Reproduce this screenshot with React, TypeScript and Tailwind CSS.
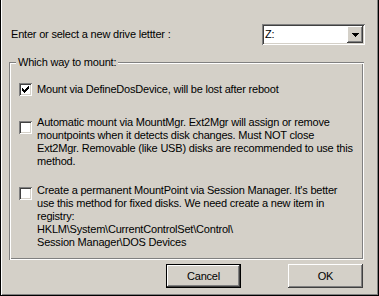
import type { ReactNode } from 'react';

const raised =
  'shadow-[inset_-1px_-1px_#404040,inset_1px_1px_#ffffff,inset_-2px_-2px_#808080,inset_2px_2px_#d4d0c8]';
const sunken =
  'shadow-[inset_1px_1px_#808080,inset_-1px_-1px_#ffffff,inset_2px_2px_#404040,inset_-2px_-2px_#d4d0c8]';

function CheckBox({ checked }: { checked?: boolean }) {
  return (
    <span className={`relative block h-[13px] w-[13px] shrink-0 bg-white ${sunken}`}>
      {checked && (
        <svg className="absolute left-[3px] top-[3px]" width="7" height="7" viewBox="0 0 7 7" shapeRendering="crispEdges">
          <path
            fill="#000"
            d="M6 0h1v1h-1z M5 1h2v1h-2z M0 2h1v1h-1z M4 2h3v1h-3z M0 3h2v1h-2z M3 3h3v1h-3z M0 4h5v1h-5z M1 5h3v1h-3z M2 6h1v1h-1z"
          />
        </svg>
      )}
    </span>
  );
}

function Option({
  checked,
  boxOffset,
  className,
  lines,
}: {
  checked?: boolean;
  boxOffset: string;
  className: string;
  lines: ReactNode[];
}) {
  return (
    <div className={`flex items-start pl-[10px] ${className}`}>
      <div className={boxOffset}>
        <CheckBox checked={checked} />
      </div>
      <div className="ml-[5px] leading-[13px]">
        {lines.map((line, i) => (
          <div key={i} className="whitespace-pre">
            {line}
          </div>
        ))}
      </div>
    </div>
  );
}

function Button({ children, isDefault }: { children: ReactNode; isDefault?: boolean }) {
  if (isDefault) {
    return (
      <div className="h-[24px] w-[75px] bg-black p-px">
        <div className={`flex h-full w-full items-center justify-center bg-[#d4d0c8] ${raised}`}>{children}</div>
      </div>
    );
  }
  return (
    <div className={`flex h-[24px] w-[75px] items-center justify-center bg-[#d4d0c8] ${raised}`}>{children}</div>
  );
}

export default function App() {
  return (
    <div
      className="h-[296px] w-[379px] overflow-hidden bg-[#d4d0c8] pt-[24px] text-[11px] tracking-[-0.2px] text-black shadow-[inset_1px_0_#000000,inset_-1px_0_#000000,inset_0_-1px_#000000,inset_2px_0_#ffffff,inset_-2px_0_#808080,inset_0_-2px_#808080]"
      style={{ fontFamily: '"Liberation Sans", Arial, sans-serif' }}
    >
      {/* drive letter row */}
      <div className="flex items-center justify-between pl-[11px] pr-[14px]">
        <span>Enter or select a new drive lettter :</span>
        <div className={`flex h-[21px] w-[103px] items-center bg-white p-[2px] ${sunken}`}>
          <span className="flex-1 pl-[1px] leading-[17px]">Z:</span>
          <span className={`flex h-[17px] w-[16px] items-center justify-center bg-[#d4d0c8] ${raised}`}>
            <svg width="7" height="4" viewBox="0 0 7 4" shapeRendering="crispEdges">
              <path fill="#000" d="M0 0h7v1h-7z M1 1h5v1h-5z M2 2h3v1h-3z M3 3h1v1h-1z" />
            </svg>
          </span>
        </div>
      </div>

      {/* group box */}
      <div className="relative ml-[9px] mt-[17px] w-[355px] pb-[11px] pt-[21px] shadow-[inset_1px_1px_#808080,inset_-1px_-1px_#ffffff,inset_2px_2px_#ffffff,inset_-2px_-2px_#808080]">
        <span className="absolute left-[7px] top-[-6px] bg-[#d4d0c8] px-[2px] leading-[13px]">Which way to mount:</span>

        <Option
          checked
          boxOffset="mt-0"
          className=""
          lines={['Mount via DefineDosDevice, will be lost after reboot']}
        />
        <Option
          boxOffset="mt-[5px]"
          className="mt-[20px]"
          lines={[
            'Automatic mount via MountMgr. Ext2Mgr will assign or remove',
            'mountpoints when it detects disk changes. Must NOT close',
            'Ext2Mgr. Removable (like USB) disks are recommended to use this',
            'method.',
          ]}
        />
        <Option
          boxOffset="mt-[3px]"
          className="mt-[16px]"
          lines={[
            "Create a permanent MountPoint via Session Manager. It's better",
            'use this method for fixed disks. We need create a new item in',
            'registry:',
            'HKLM\\System\\CurrentControlSet\\Control\\',
            'Session Manager\\DOS Devices',
          ]}
        />
      </div>

      {/* buttons */}
      <div className="mt-[4px] flex justify-end gap-[47px] pr-[16px]">
        <Button isDefault>Cancel</Button>
        <Button>OK</Button>
      </div>
    </div>
  );
}
